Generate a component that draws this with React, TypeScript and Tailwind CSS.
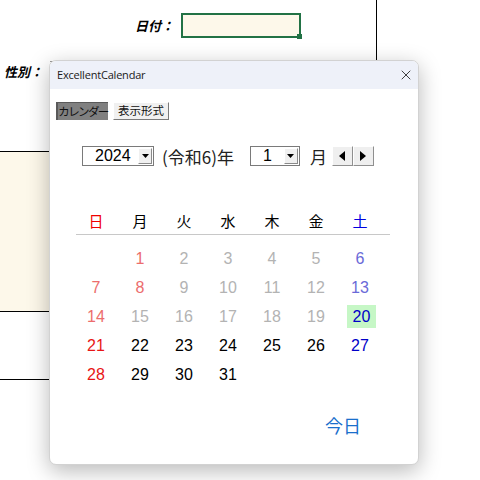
import { X } from 'lucide-react'

type Day = { d: number; c: string; hl?: boolean }

const jp = "font-['Noto_Sans_CJK_JP','Noto_Sans',sans-serif]"

const rows: (Day | null)[][] = [
  [null, { d: 1, c: 'text-[#ec6d6d]' }, { d: 2, c: 'text-[#b3b3b3]' }, { d: 3, c: 'text-[#b3b3b3]' }, { d: 4, c: 'text-[#b3b3b3]' }, { d: 5, c: 'text-[#b3b3b3]' }, { d: 6, c: 'text-[#6a6ad8]' }],
  [{ d: 7, c: 'text-[#ec6d6d]' }, { d: 8, c: 'text-[#ec6d6d]' }, { d: 9, c: 'text-[#b3b3b3]' }, { d: 10, c: 'text-[#b3b3b3]' }, { d: 11, c: 'text-[#b3b3b3]' }, { d: 12, c: 'text-[#b3b3b3]' }, { d: 13, c: 'text-[#6a6ad8]' }],
  [{ d: 14, c: 'text-[#ec6d6d]' }, { d: 15, c: 'text-[#b3b3b3]' }, { d: 16, c: 'text-[#b3b3b3]' }, { d: 17, c: 'text-[#b3b3b3]' }, { d: 18, c: 'text-[#b3b3b3]' }, { d: 19, c: 'text-[#b3b3b3]' }, { d: 20, c: 'text-[#0000c8]', hl: true }],
  [{ d: 21, c: 'text-[#e81515]' }, { d: 22, c: 'text-black' }, { d: 23, c: 'text-black' }, { d: 24, c: 'text-black' }, { d: 25, c: 'text-black' }, { d: 26, c: 'text-black' }, { d: 27, c: 'text-[#0000c8]' }],
  [{ d: 28, c: 'text-[#e81515]' }, { d: 29, c: 'text-black' }, { d: 30, c: 'text-black' }, { d: 31, c: 'text-black' }, null, null, null],
]

const week = [
  { t: '日', c: 'text-[#f00000]' },
  { t: '月', c: 'text-black' },
  { t: '火', c: 'text-black' },
  { t: '水', c: 'text-black' },
  { t: '木', c: 'text-black' },
  { t: '金', c: 'text-black' },
  { t: '土', c: 'text-[#0000e0]' },
]

function DropButton() {
  return (
    <div className="w-[14px] h-[16px] bg-[#f0f0f0] border-t border-l border-white border-r border-b border-r-[#8a8a8a] border-b-[#8a8a8a] flex items-center justify-center">
      <svg width="7" height="4" viewBox="0 0 7 4">
        <path d="M0 0h7L3.5 4z" fill="#000" />
      </svg>
    </div>
  )
}

function Combo({ value, width }: { value: string; width: string }) {
  return (
    <div className={`${width} h-[20px] bg-white border border-[#7a7a7a] flex items-center justify-between pl-[12px] pr-[1px]`}>
      <span className="text-[16px] leading-none font-['Liberation_Sans',sans-serif] text-black">{value}</span>
      <DropButton />
    </div>
  )
}

function Spin({ dir }: { dir: 'l' | 'r' }) {
  return (
    <div className="w-[21px] h-[20px] bg-[#efefef] border border-t-white border-l-white border-r-[#8f8f8f] border-b-[#8f8f8f] flex items-center justify-center">
      <svg width="6" height="10" viewBox="0 0 6 10">
        {dir === 'l' ? <path d="M6 0v10L0 5z" fill="#000" /> : <path d="M0 0v10l6-5z" fill="#000" />}
      </svg>
    </div>
  )
}

export default function App() {
  return (
    <div className={`relative w-[480px] h-[480px] bg-white overflow-hidden ${jp}`}>
      {/* sheet behind the dialog */}
      <div className="w-[377px] border-r border-black">
        <div className="h-[152px] border-b border-black">
          <div className="flex items-center pl-[135px] pt-[13px]">
            <span className="text-[13px] font-bold italic text-black w-[46px]">日付：</span>
            <div className="relative w-[120px] h-[25px] border-2 border-[#227245] bg-[#fdf8ea]">
              <div className="absolute -right-[3px] -bottom-[3px] w-[5px] h-[5px] bg-[#227245]" />
            </div>
          </div>
          <div className="flex items-end h-[23px] mt-[1px]">
            <div className="w-[50px]" />
            <div className="w-[65px] h-[1px] bg-[#9a9a9a]" />
            <div className="w-[67px]" />
            <div className="w-[54px] h-[1px] bg-[#9a9a9a]" />
          </div>
          <div className="pl-[4px] text-[13px] font-bold italic text-black">性別：</div>
        </div>
        <div className="h-[160px] border-b border-black bg-[#fdf8ea]" />
        <div className="h-[68px] border-b border-black" />
      </div>

      {/* dialog */}
      <div className="absolute left-[49px] top-[60px] w-[370px] h-[405px] bg-white rounded-[7px] border border-[#d2d2d2] shadow-[0_6px_22px_rgba(0,0,0,0.28)] overflow-hidden flex flex-col">
        <div className="h-[28px] bg-[#eef1f9] flex items-center justify-between pl-[7px] pr-[4px]">
          <span className="text-[11px] text-[#1a1a1a] font-['Open_Sans',sans-serif] tracking-[-0.2px]">ExcellentCalendar</span>
          <X className="w-[16px] h-[16px] text-[#222]" strokeWidth={1.3} />
        </div>

        <div className="flex items-center gap-[5px] pl-[6px] mt-[13px]">
          <div className="w-[52px] h-[18px] bg-[#808080] border-l-2 border-t border-[#5a5a5a] flex items-center justify-center text-[11.5px] text-[#111] tracking-[-1.6px]">カレンダー</div>
          <div className="w-[56px] h-[18px] bg-[#f0f0f0] border border-t-white border-l-white border-r-[#7a7a7a] border-b-[#7a7a7a] flex items-center justify-center text-[11.5px] text-[#111]">表示形式</div>
        </div>

        <div className="flex items-center pl-[32px] mt-[26px]">
          <Combo value="2024" width="w-[72px]" />
          <span className="ml-[8px] text-[17px] leading-none text-[#222]">(令和6)年</span>
          <div className="ml-[16px]">
            <Combo value="1" width="w-[50px]" />
          </div>
          <span className="ml-[10px] text-[17px] leading-none text-[#222]">月</span>
          <div className="ml-[5px] flex">
            <Spin dir="l" />
            <Spin dir="r" />
          </div>
        </div>

        <div className="ml-[24px] mt-[41px] w-[316px]">
          <div className="grid grid-cols-[repeat(7,44px)] h-[26px] items-center">
            {week.map((w) => (
              <div key={w.t} className={`text-center text-[15px] leading-none ${w.c}`}>{w.t}</div>
            ))}
          </div>
          <div className="ml-[2px] w-[314px] h-[1px] bg-[#c8c8c8] mt-[1px]" />
          <div className="mt-[9px]">
            {rows.map((r, i) => (
              <div key={i} className="grid grid-cols-[repeat(7,44px)] h-[29px] items-center">
                {r.map((d, j) => (
                  <div key={j} className="flex justify-center">
                    {d && (
                      <span className={`${d.c} text-[16px] leading-none font-['Liberation_Sans',sans-serif] ${d.hl ? 'bg-[#c6f7c6] w-[29px] h-[23px] flex items-center justify-center ml-[3px]' : ''}`}>
                        {d.d}
                      </span>
                    )}
                  </div>
                ))}
              </div>
            ))}
          </div>
        </div>

        <div className="mt-[23px] pl-[275px] text-[18px] text-[#1a6fcc]">今日</div>
      </div>
    </div>
  )
}
